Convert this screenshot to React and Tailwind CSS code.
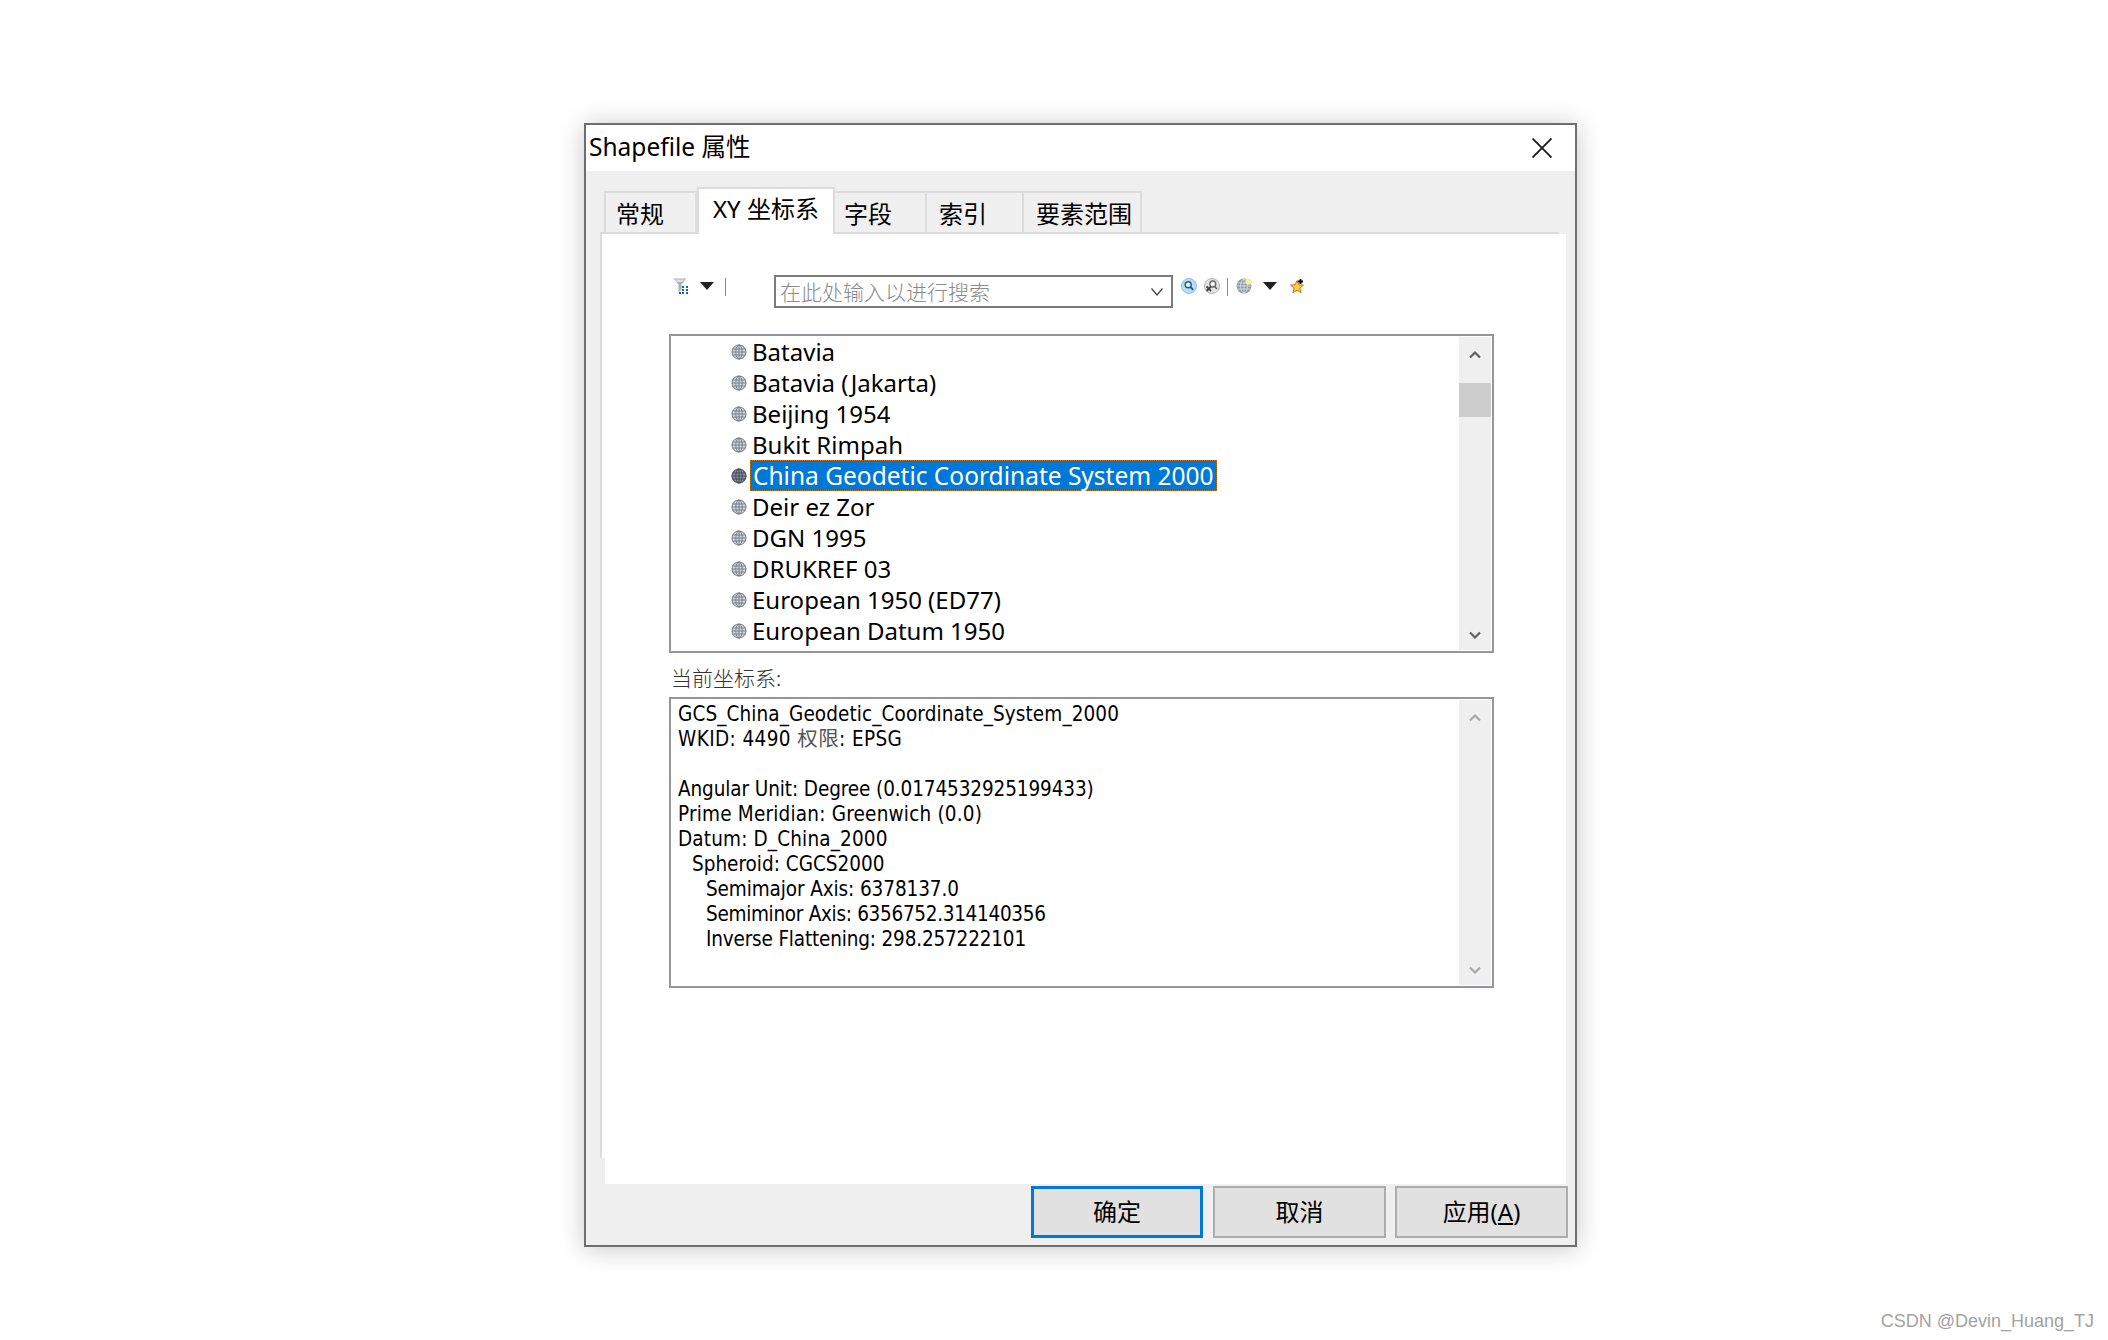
import React from "react";

const ui = "font-['Noto_Sans','Noto_Sans_CJK_SC',sans-serif]";
const serif = "font-['Noto_Sans_CJK_SC',sans-serif] font-light";
const detail = "font-['DejaVu_Sans_Condensed','DejaVu_Sans','Noto_Sans_CJK_SC',sans-serif]";

const datums = [
  "Batavia",
  "Batavia (Jakarta)",
  "Beijing 1954",
  "Bukit Rimpah",
  "China Geodetic Coordinate System 2000",
  "Deir ez Zor",
  "DGN 1995",
  "DRUKREF 03",
  "European 1950 (ED77)",
  "European Datum 1950",
];

const tabs = [
  { label: "常规", w: "w-[93px]", pl: "pl-[10px]" },
  { label: "XY 坐标系", w: "w-[138px]", pl: "pl-[14px]", active: true },
  { label: "字段", w: "w-[92px]", pl: "pl-[9px]" },
  { label: "索引", w: "w-[97px]", pl: "pl-[12px]" },
  { label: "要素范围", w: "w-[118px]", pl: "pl-[12px]" },
];

function GlobeIcon({ dark }) {
  return (
    <svg width="16" height="16" viewBox="0 0 16 16" className="shrink-0">
      <circle cx="8" cy="8" r="7.5" fill={dark ? "#8c929a" : "#d4d8dc"} />
      <g fill="none" stroke={dark ? "#3f4650" : "#6f7983"} strokeWidth="0.9">
        <circle cx="8" cy="8" r="7" />
        <ellipse cx="8" cy="8" rx="3.2" ry="7" />
        <path d="M1.500 5h13M1 8h14M1.500 11h13M8 1v14" />
      </g>
    </svg>
  );
}

function FilterIcon() {
  return (
    <svg width="16" height="16" viewBox="0 0 16 16" className="shrink-0">
      <path d="M0.500 0.500h12.500l-4.500 6v5l-3 3v-8z" fill="#a8b2ba" />
      <path d="M2 1.500h9.500l-3 2.500h-4z" fill="#dfe4e8" />
      <g fill="#0f62b8">
        <rect x="9" y="8" width="2" height="2" />
        <rect x="13" y="8" width="2" height="2" />
        <rect x="9" y="11" width="2" height="2" />
        <rect x="13" y="11" width="2" height="2" />
        <rect x="6" y="14" width="2" height="2" />
        <rect x="9" y="14" width="2" height="2" />
        <rect x="13" y="14" width="2" height="2" />
      </g>
    </svg>
  );
}

function SearchIcon() {
  return (
    <svg width="16" height="16" viewBox="0 0 16 16" className="shrink-0">
      <circle cx="8" cy="8" r="7.500" fill="#bcdcf2" stroke="#8fbfe0" />
      <circle cx="7.200" cy="6.800" r="3" fill="#eaf5fc" stroke="#0f5f9e" strokeWidth="1.400" />
      <path d="M9.400 9l2.800 2.800" stroke="#0f5f9e" strokeWidth="1.800" />
    </svg>
  );
}

function ClearSearchIcon() {
  return (
    <svg width="16" height="16" viewBox="0 0 16 16" className="shrink-0">
      <circle cx="8" cy="8" r="7.500" fill="#e4e4e4" stroke="#b5b5b5" />
      <circle cx="8.800" cy="6" r="3" fill="#f2f2f2" stroke="#666" strokeWidth="1.300" />
      <path d="M10.600 8.400l2.400 2.600" stroke="#666" strokeWidth="1.600" />
      <path d="M2.500 8.500l4.500 4.500M7 8.500L2.500 13" stroke="#444" strokeWidth="1.900" />
    </svg>
  );
}

function NewGlobeIcon() {
  return (
    <svg width="17" height="16" viewBox="0 0 17 16" className="shrink-0">
      <circle cx="8" cy="8" r="7.500" fill="#8e98a3" />
      <g fill="none" stroke="#dfe3e7" strokeWidth="0.800">
        <ellipse cx="8" cy="8" rx="3.400" ry="7" />
        <path d="M1.500 5h13M1 8h14M1.500 11h13M8 1v14" />
      </g>
      <circle cx="12.600" cy="3.600" r="3.200" fill="#f6efa4" />
    </svg>
  );
}

function StarAddIcon() {
  return (
    <svg width="16" height="17" viewBox="0 0 16 17" className="shrink-0">
      <path
        d="M8 2.500l1.800 4.300 4.700.3-3.600 3 1.200 4.600L8 12.200l-4.100 2.500 1.200-4.600-3.600-3 4.700-.3z"
        fill="#fbcf3c"
        stroke="#d2701a"
        strokeWidth="1"
      />
      <path d="M9 3.500h5M11.500 1v5" stroke="#000" strokeWidth="1.800" />
    </svg>
  );
}

function Caret() {
  return (
    <svg width="14" height="8" viewBox="0 0 14 8" className="shrink-0 mt-1">
      <path d="M0 0h14L7 8z" fill="#222" />
    </svg>
  );
}

function Divider() {
  return <div className="w-px h-[18px] bg-[#8a8a8a] shrink-0" />;
}

function ScrollArrow({ up, color }) {
  return (
    <svg width="12" height="9" viewBox="0 0 12 9">
      <path
        d={up ? "M1 7.500l5-5 5 5" : "M1 1.500l5 5 5-5"}
        fill="none"
        stroke={color}
        strokeWidth="2.200"
      />
    </svg>
  );
}

export default function App() {
  return (
    <div className="relative w-[2108px] h-[1340px] bg-white pt-[123px] pl-[584px] overflow-hidden">
      <div className={`${ui} w-[993px] h-[1124px] border-2 border-[#6e6e6e] bg-[#efefef] text-black shadow-[0_2px_24px_rgba(0,0,0,0.22)]`}>
        {/* Title bar */}
        <div className="h-[46px] bg-white flex items-center justify-between pl-[3px] pr-[23px]">
          <span className="text-[24.500px] leading-none pb-[2px]">Shapefile 属性</span>
          <svg width="20" height="20" viewBox="0 0 20 20">
            <path d="M0.500 0.500l19 19M19.500 0.500l-19 19" stroke="#1a1a1a" strokeWidth="1.800" />
          </svg>
        </div>

        {/* Tabs */}
        <div className="h-[61px] flex items-end pl-[18px]">
          {tabs.map((tab) =>
            tab.active ? (
              <div
                key={tab.label}
                className={`${tab.w} ${tab.pl} relative z-10 h-[47px] -mb-[2px] bg-white border-2 border-b-0 border-[#dcdcdc] flex items-center pb-[5px] text-[24px] leading-none whitespace-nowrap`}
              >
                {tab.label}
              </div>
            ) : (
              <div
                key={tab.label}
                className={`${tab.w} ${tab.pl} h-[41px] bg-[#f0f0f0] border-t-2 border-r-2 first:border-l-2 border-[#dcdcdc] flex items-center pt-[3px] text-[24px] leading-none whitespace-nowrap`}
              >
                {tab.label}
              </div>
            )
          )}
        </div>

        {/* Panel */}
        <div className="relative ml-[14px] w-[966px] h-[952px] bg-white border-t-2 border-l-2 border-[#dcdcdc] pl-[67px]">
          <div className="absolute right-0 -top-[2px] w-[7px] h-[2px] bg-[#efefef]" />
          <div className="absolute -left-[2px] bottom-0 w-[5px] h-[26px] bg-[#efefef]" />

          {/* Toolbar */}
          <div className="flex items-start mt-[41px] h-[33px]">
            <div className="flex items-start pt-[3px] ml-[4px]">
              <FilterIcon />
              <div className="ml-[11px]"><Caret /></div>
              <div className="ml-[11px]"><Divider /></div>
            </div>
            <div className="ml-[48px] w-[399px] h-[33px] border-2 border-[#7c7c7c] flex items-center justify-between pl-[4px] pr-[8px]">
              <span className={`${serif} text-[21px] leading-none text-[#8a8a8a] whitespace-nowrap`}>在此处输入以进行搜索</span>
              <svg width="12" height="8" viewBox="0 0 12 8">
                <path d="M0.500 0.500l5.500 6.500 5.500-6.500" fill="none" stroke="#444" strokeWidth="1.300" />
              </svg>
            </div>
            <div className="flex items-start pt-[3px] ml-[8px]">
              <SearchIcon />
              <div className="ml-[7px]"><ClearSearchIcon /></div>
              <div className="ml-[7px]"><Divider /></div>
              <div className="ml-[8px]"><NewGlobeIcon /></div>
              <div className="ml-[10px]"><Caret /></div>
              <div className="ml-[12px]"><StarAddIcon /></div>
            </div>
          </div>

          {/* Datum list */}
          <div className="mt-[26px] w-[825px] h-[319px] border-2 border-[#93979c] flex">
            <div className="flex-1 pl-[60px]">
              {datums.map((name, i) => {
                const selected = i === 4;
                return (
                  <div key={name} className="h-[31px] flex items-center">
                    <GlobeIcon dark={selected} />
                    <span
                      className={
                        selected
                          ? "ml-[3px] h-[31px] px-[2px] pt-[2px] flex items-center border border-dotted border-[#c46a10] bg-[#0078d7] text-white text-[24.500px] leading-none whitespace-nowrap"
                          : "ml-[5px] text-[24px] leading-none whitespace-nowrap"
                      }
                    >
                      {name}
                    </span>
                  </div>
                );
              })}
            </div>
            <div className="w-[32px] mr-[1px] my-[1px] bg-[#efefef] flex flex-col items-center justify-between pt-[13px] pb-[10px] relative">
              <ScrollArrow up color="#606060" />
              <div className="absolute left-0 top-[46px] w-full h-[34px] bg-[#cdcdcd]" />
              <ScrollArrow color="#606060" />
            </div>
          </div>

          {/* Current coordinate system */}
          <div className={`${serif} mt-[10px] h-[34px] pl-[2px] text-[21px] leading-[28px] text-[#333]`}>当前坐标系:</div>
          <div className="w-[825px] h-[291px] border-2 border-[#93979c] flex">
            <div className={`${detail} flex-1 pt-[3px] pl-[7px] text-[20.500px] leading-[25px] whitespace-pre`}>
              <div className="tracking-[0.1px]">GCS_China_Geodetic_Coordinate_System_2000</div>
              <div className="tracking-[0.4px]">WKID: 4490 <span className="text-[#555]">权限</span>: EPSG</div>
              <div className="h-[25px]" />
              <div className="-tracking-[0.1px]">Angular Unit: Degree (0.0174532925199433)</div>
              <div className="tracking-[0.2px]">Prime Meridian: Greenwich (0.0)</div>
              <div className="tracking-[0.15px]">Datum: D_China_2000</div>
              <div className="pl-[14px]">Spheroid: CGCS2000</div>
              <div className="pl-[28px] -tracking-[0.1px]">Semimajor Axis: 6378137.0</div>
              <div className="pl-[28px] -tracking-[0.3px]">Semiminor Axis: 6356752.314140356</div>
              <div className="pl-[28px] -tracking-[0.17px]">Inverse Flattening: 298.257222101</div>
            </div>
            <div className="w-[32px] mr-[1px] my-[1px] bg-[#efefef] flex flex-col items-center justify-between pt-[13px] pb-[10px]">
              <ScrollArrow up color="#a8a8a8" />
              <ScrollArrow color="#a8a8a8" />
            </div>
          </div>
        </div>

        {/* Buttons */}
        <div className="mt-[2px] flex justify-end pr-[7px] text-[24px] leading-none">
          <button className="w-[172px] h-[52px] bg-[#e1e1e1] border-[3px] border-[#0078d7]">确定</button>
          <button className="ml-[10px] w-[173px] h-[52px] bg-[#e1e1e1] border-2 border-[#adadad]">取消</button>
          <button className="ml-[9px] w-[173px] h-[52px] bg-[#e1e1e1] border-2 border-[#adadad]">
            应用(<span className="underline">A</span>)
          </button>
        </div>
      </div>

      {/* Watermark */}
      <div className="absolute right-[14px] bottom-[10px] font-['Liberation_Sans',sans-serif] text-[18px] leading-none text-[#a3a3a3]">
        CSDN @Devin_Huang_TJ
      </div>
    </div>
  );
}
